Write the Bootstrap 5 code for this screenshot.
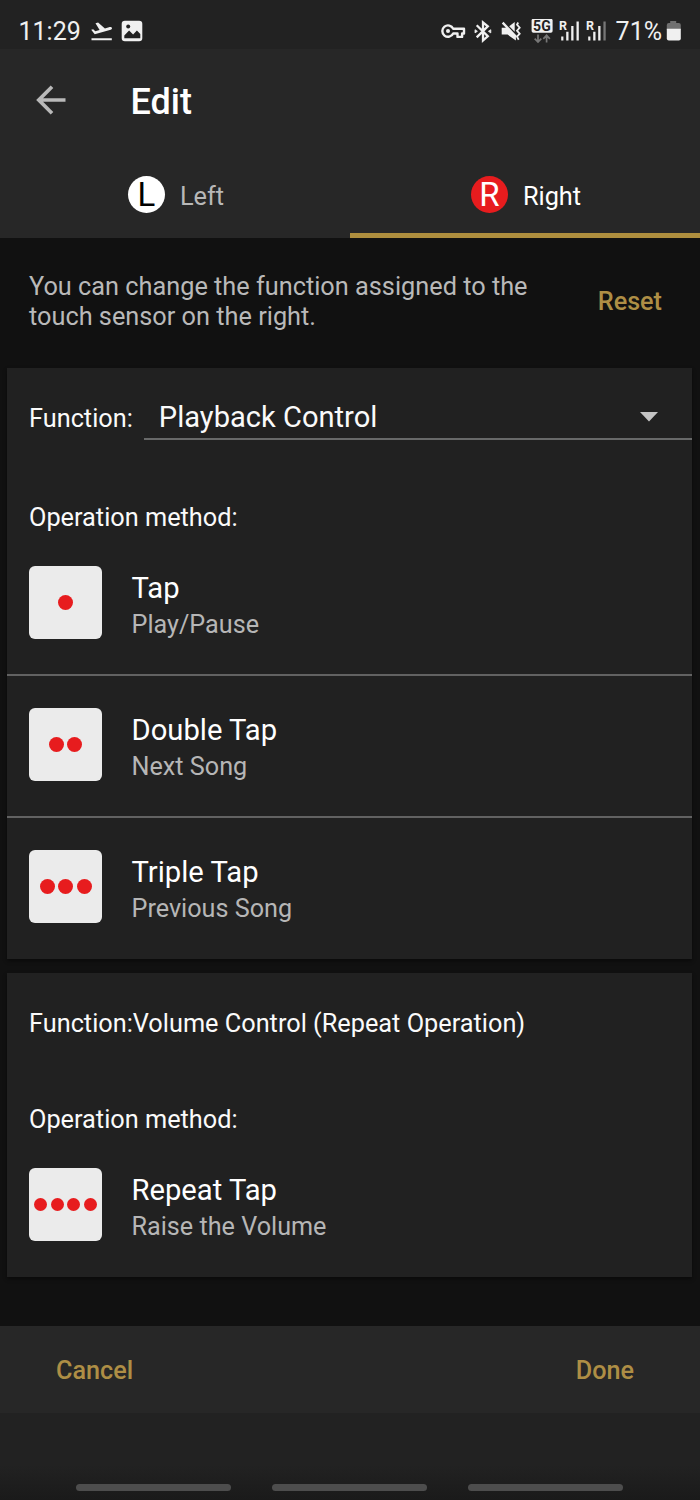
<!DOCTYPE html>
<html lang="en">
<head>
<meta charset="utf-8">
<meta name="viewport" content="width=device-width, initial-scale=1">
<title>Edit touch sensor</title>
<link rel="stylesheet" href="https://cdn.jsdelivr.net/npm/bootstrap@5.3.0/dist/css/bootstrap.min.css">
<style>
body{font-family:Roboto,"Liberation Sans",sans-serif;background:#111;color:#fafafa;font-size:25.3px;line-height:30px;height:1500px;overflow:hidden}
svg{display:block;flex:none}
.status-bar{height:49px;background:#222;padding:14px 19px 0 18.5px;font-size:25px;line-height:36px;color:#f0f0f0}
.status-bar svg{margin-top:5px}
.status-left svg{margin-top:6px}
.app-head{height:189px;background:#272727}
.title-row{height:105px;padding-left:35.5px}
.title-row svg{margin-bottom:3px}
.title-row h1{font-size:36px;line-height:44px;font-weight:500;margin:1px 0 0 65px;color:#fff}
.tabs-row{height:84px}
.tab-item{color:#b8b8b8;background:none;border:0;border-bottom:5px solid transparent;padding:2px 0 0 2px}
.tab-item.active{color:#fff;border-color:#ae8e3e}
.tab-name{margin-left:15px;padding-top:4px}
.side-mark{width:37px;height:37px;border-radius:50%;font-size:33px;line-height:38px;font-weight:400}
.side-l{background:#fff;color:#000}
.side-r{background:#e71c1e;color:#fff}
.intro{height:130px;padding:34px 38px 0 29px;color:#b9b9b9}
.gold{font-size:25.2px;color:#ae8e45;font-weight:500;background:none;border:0;padding:0}
.panel{background:#212121;margin:0 8px 14px 7px;box-shadow:0 2px 4px rgba(0,0,0,.45)}
.fn-row{height:72px;padding-left:22px}
.fn-select{border-bottom:2px solid #686969;margin-left:11px;padding:28px 34px 0 15px;font-size:29.1px;line-height:40px}
.fn-row label{padding-top:36px}
.op-title{padding-left:22px}
.op-row{height:142px;padding:34px 22px 0}
.op-title+.op-row{margin-top:-1px}
.op-row+.op-row{border-top:2px solid #626262;padding-top:32px}
.tile{width:73px;height:73px;border-radius:6px;background:#ebebeb;gap:3.5px;flex:none}
.tile i{width:15px;height:15px;border-radius:50%;background:#e71c1e}
.tile.four i{width:13px;height:13px}
.op-text{margin-left:29.5px}
.op-name{font-size:29.2px;line-height:36px;padding-top:4px;color:#fff}
.op-desc{font-size:25.2px;color:#b6b6b6;line-height:30px;padding-top:4px}
.foot{height:87px;background:#272727;padding:3px 66px 0 56px}
.sys-nav{height:87px;background:linear-gradient(#222 0,#222 60%,#1a1a1a 100%);padding:71px 77px 0 76px}
.sys-nav span{width:155px;height:7px;border-radius:4px;background:#4d4d4d}
</style>
</head>
<body>
<div class="status-bar d-flex justify-content-between">
  <div class="status-left d-flex">
    <span id="clock">11:29</span>
    <svg style="margin-left:9px" width="22" height="22" viewBox="90 20 22 22" fill="#f0f0f0"><path d="M91.5 38.3h20.3v2H91.5zM91.2 29.7l2-.5 2.1 2.1 4.3-1.2-4.1-6.8 2.6-.7 6.8 5.8 4.8-1.3c2.4-.6 3.2 1.9 1 2.6L94.7 34.3z"/></svg>
    <svg style="margin-left:9px" width="22" height="22" viewBox="121 20 22 22"><rect x="121.7" y="20.8" width="20.6" height="20.4" rx="3.2" fill="#f0f0f0"/><circle cx="128.2" cy="26.4" r="2" fill="#222"/><path d="M124.3 38.2v-2.8l4.8-5 4 4.2 3.8-4.2 3.4 3.6v4.2z" fill="#222"/></svg>
  </div>
  <div class="d-flex">
    <svg style="margin-top:6px" width="26" height="22" viewBox="440 20 26 22" fill="none" stroke="#f0f0f0"><path d="M453.2 28.7h10.8v4.8h-1.9v3.4h-4.6v-3.4h-4.3a5.7 5.7 0 1 1 0-4.8z" stroke-width="2.4" stroke-linejoin="round"/><circle cx="448" cy="31.1" r="2" fill="#f0f0f0" stroke="none"/></svg>
    <svg style="margin-left:7px" width="20" height="24" viewBox="473 19 20 24" fill="none" stroke="#f0f0f0" stroke-width="2.3"><path d="M476.7 25.3l11.1 11-4.8 4.1v-18l4.8 4-11.1 11"/><path d="M475 29.7l2.4 1.6-2.4 1.6zM490.8 29.7l-2.4 1.6 2.4 1.6z" fill="#f0f0f0" stroke-width=".8"/></svg>
    <svg style="margin-left:7px" width="22" height="24" viewBox="500 19 22 24" fill="#f0f0f0"><path d="M501.7 27.8h5l9.2 9.3v3.5l-8.3-6h-5.9zM509.2 26.2l5.5-4.2v9.8zM501.8 23.4l1.7-1.6 13.4 14.3-1.5 1.7z"/><path d="M518.2 22.5l-1.2 2.2 2.7 3-2.7 3 2.7 3-2.7 3 1.7 3" fill="none" stroke="#f0f0f0" stroke-width="1.8"/></svg>
    <svg style="margin-left:9px" width="22" height="26" viewBox="531 17 22 26"><rect x="531.6" y="16.8" width="21" height="14" rx="1.8" fill="#f0f0f0"/><text x="542.1" y="28.9" text-anchor="middle" font-family="Roboto" font-weight="700" font-size="14" fill="#222" letter-spacing=".3">5G</text><path d="M538 32.5v7.5M534.7 36.6l3.3 3.5 3.3-3.5M546.6 40.6v-7M543.3 36.8l3.3-3.5 3.3 3.5" fill="none" stroke="#777" stroke-width="1.7"/></svg>
    <svg style="margin-left:6px" width="21" height="24" viewBox="559 19 21 24" fill="#f0f0f0"><text x="558.9" y="30" font-family="Roboto" font-weight="700" font-size="12.5">R</text><path d="M561.2 36.5h2.2v4h-2.2zM566.2 31.7h2.3v8.8h-2.3zM571.2 26h2.3v14.5h-2.3zM576.5 21.5h2.3v19h-2.3z"/></svg>
    <svg style="margin-left:6px" width="21" height="24" viewBox="586 19 21 24" fill="#f0f0f0"><text x="585.9" y="30" font-family="Roboto" font-weight="700" font-size="12.5">R</text><path d="M588.2 36.5h2.2v4h-2.2zM593.2 31.7h2.3v8.8h-2.3zM598.2 26h2.3v14.5h-2.3z"/><path d="M603.4 21.5h2.3v19h-2.3z" fill="#777"/></svg>
    <span id="battery" style="margin-left:9px">71%</span>
    <svg style="margin-left:4px" width="15" height="24" viewBox="666 19 15 24"><path d="M670.2 21h6v2h2.6a2 2 0 0 1 2 2v5h-14v-5a2 2 0 0 1 2-2h1.4z" fill="#707070"/><path d="M666.8 28.8h14v9.7a2 2 0 0 1-2 2h-10a2 2 0 0 1-2-2z" fill="#f0f0f0"/></svg>
  </div>
</div>

<header class="app-head">
  <div class="title-row d-flex align-items-center">
    <svg width="30" height="30" viewBox="36 85 30 30" fill="none" stroke="#b9b9b9" stroke-width="3.7"><path d="M65.5 100H39M52 86.8L38.8 100 52 113.2"/></svg>
    <h1>Edit</h1>
  </div>
  <nav class="tabs-row d-flex">
    <button class="tab-item w-50 d-flex justify-content-center align-items-center"><span class="side-mark side-l">L</span><span class="tab-name">Left</span></button>
    <button class="tab-item active w-50 d-flex justify-content-center align-items-center"><span class="side-mark side-r">R</span><span class="tab-name">Right</span></button>
  </nav>
</header>

<main>
  <div class="intro d-flex justify-content-between">
    <div class="intro-text">You can change the function assigned to the<br>touch sensor on the right.</div>
    <button class="gold align-self-start" style="margin-top:15px">Reset</button>
  </div>

  <section class="panel" style="height:591px">
    <div class="fn-row d-flex">
      <label>Function:</label>
      <div class="fn-select flex-grow-1 d-flex justify-content-between align-items-center"><span>Playback Control</span>
        <svg width="18" height="10" viewBox="0 0 18 10"><path d="M0 0h18L9 9.5z" fill="#c4c4c4"/></svg></div>
    </div>
    <div class="op-title" style="padding-top:63px">Operation method:</div>
    <div class="op-row d-flex"><div class="tile d-flex justify-content-center align-items-center"><i></i></div><div class="op-text"><div class="op-name">Tap</div><div class="op-desc">Play/Pause</div></div></div>
    <div class="op-row d-flex"><div class="tile d-flex justify-content-center align-items-center"><i></i><i></i></div><div class="op-text"><div class="op-name">Double Tap</div><div class="op-desc">Next Song</div></div></div>
    <div class="op-row d-flex"><div class="tile d-flex justify-content-center align-items-center"><i></i><i></i><i></i></div><div class="op-text"><div class="op-name">Triple Tap</div><div class="op-desc">Previous Song</div></div></div>
  </section>

  <section class="panel" style="height:304px;margin-bottom:49px">
    <div class="op-title" style="padding-top:36px">Function:Volume Control (Repeat Operation)</div>
    <div class="op-title" style="padding-top:66px">Operation method:</div>
    <div class="op-row d-flex"><div class="tile four d-flex justify-content-center align-items-center"><i></i><i></i><i></i><i></i></div><div class="op-text"><div class="op-name">Repeat Tap</div><div class="op-desc">Raise the Volume</div></div></div>
  </section>
</main>

<footer>
  <div class="foot d-flex justify-content-between align-items-center"><button class="gold">Cancel</button><button class="gold">Done</button></div>
  <div class="sys-nav d-flex justify-content-between"><span></span><span></span><span></span></div>
</footer>
<script src="https://cdn.jsdelivr.net/npm/bootstrap@5.3.0/dist/js/bootstrap.bundle.min.js"></script>
</body>
</html>
